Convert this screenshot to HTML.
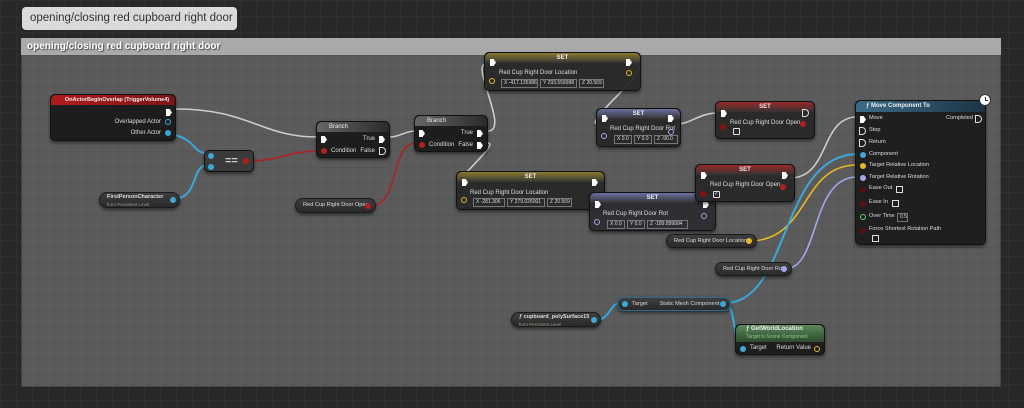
<!DOCTYPE html>
<html><head><meta charset="utf-8"><style>
*{margin:0;padding:0;box-sizing:border-box;white-space:nowrap}
body{width:1024px;height:408px;overflow:hidden;background:#282828;font-family:"Liberation Sans",sans-serif;position:relative;
background-image:linear-gradient(#2f2f2f 1px,transparent 1px),linear-gradient(90deg,#2f2f2f 1px,transparent 1px);background-size:16px 16px}
.a{position:absolute}
.bub{left:22px;top:7px;width:215px;height:23px;background:#dadada;border-radius:4px;color:#333;font-size:11.5px;line-height:23px;padding-left:8px}
.cm{left:21px;top:38px;width:980px;height:349px;background:#5b5b5b;border:1px solid #444;
background-image:linear-gradient(rgba(0,0,0,.05) 1px,transparent 1px),linear-gradient(90deg,rgba(0,0,0,.05) 1px,transparent 1px);background-size:16px 16px}
.ch{left:21px;top:38px;width:980px;height:17px;background:#a9a9a9;color:#fff;font-weight:bold;font-size:10px;line-height:17px;padding-left:6px;text-shadow:1px 1px 1px #444}
.n{position:absolute;background:rgba(24,24,24,.92);border-radius:5px;border:1px solid #111;box-shadow:0 2px 3px rgba(0,0,0,.5);color:#ddd;font-size:6px}
.g{position:absolute;background:linear-gradient(#3e3e3e,#2a2a2a);border-radius:8px;border:1px solid #1a1a1a;box-shadow:0 2px 3px rgba(0,0,0,.5);color:#ddd;font-size:5.6px;line-height:13px;padding-left:7px;overflow:hidden}
.t{position:absolute}
.ex{position:absolute;width:6px;height:7px;background:#fff;clip-path:polygon(0 0,60% 0,100% 50%,60% 100%,0 100%)}
.exo{position:absolute;width:7px;height:8px;border:1px solid #ddd;border-radius:0 4px 4px 0}
.p{position:absolute;width:6px;height:6px;border-radius:50%}
.v{position:absolute;border:1px solid #777;height:9px;font-size:5px;line-height:7px;color:#ddd;padding-left:2px;overflow:hidden}
.hs{position:absolute;left:0;right:0;top:0;height:10px;border-radius:5px 5px 0 0;text-align:center;font-weight:bold;font-size:6px;line-height:10px;color:#eee;overflow:hidden}
.mv .t{font-size:5.6px}
</style></head><body>
<div class="a bub">opening/closing red cupboard right door</div>
<div class="a cm"></div>
<div class="a ch">opening/closing red cupboard right door</div>

<svg class="a" style="left:0;top:0" width="1024" height="408" fill="none" stroke-width="1.6">
<path d="M176 109 C250 109,260 137,318 137" stroke="#ccc"/>
<path d="M390 137 C400 137,405 131,415 131" stroke="#ccc"/>
<path d="M488 131 C510 131,470 64,486 64" stroke="#ccc"/>
<path d="M488 143 C500 143,450 185,458 185" stroke="#ccc"/>
<path d="M634 64 C660 64,580 124,598 124" stroke="#ccc"/>
<path d="M677 124 C690 124,700 113,717 113" stroke="#ccc"/>
<path d="M598 185 C610 185,580 200,590 205" stroke="#ccc"/>
<path d="M790 178 C830 178,820 117,857 117" stroke="#ccc"/>
<path d="M168 133 C200 140,190 153,208 153" stroke="#3aa8d8" stroke-width="2"/>
<path d="M172 199 C200 199,190 165,208 165" stroke="#3aa8d8" stroke-width="2"/>
<path d="M248 161 C280 161,290 151,318 151" stroke="#b02020"/>
<path d="M370 206 C400 206,390 143,416 143" stroke="#b02020"/>
<path d="M749 241 C810 241,800 165,857 165" stroke="#e8b820"/>
<path d="M785 269 C820 269,810 177,857 177" stroke="#a0a8e8"/>
<path d="M596 320 C610 320,610 303,620 303" stroke="#3aa8d8" stroke-width="2"/>
<path d="M725 303 C790 303,780 155,857 154" stroke="#3aa8d8" stroke-width="2"/>
<path d="M725 303 C735 303,735 349,740 349" stroke="#3aa8d8" stroke-width="2"/>
</svg>

<div class="n" style="left:50px;top:94px;width:126px;height:47px">
<div class="hs" style="background:linear-gradient(90deg,#b01c1c,#7a1515);text-align:left;padding-left:14px;font-size:5.5px">OnActorBeginOverlap (TriggerVolume4)</div>
<div class="ex" style="left:115px;top:14px"></div>
<div class="t" style="right:14px;top:24px">Overlapped Actor</div><div class="p" style="right:4px;top:24px;border:1.5px solid #3aa8d8"></div>
<div class="t" style="right:14px;top:35px">Other Actor</div><div class="p" style="right:4px;top:35px;background:#3aa8d8"></div>
</div>
<div class="n" style="left:204px;top:150px;width:50px;height:22px;background:#3a3a3a">
<div class="p" style="left:3px;top:2px;background:#3aa8d8"></div><div class="p" style="left:3px;top:13px;background:#3aa8d8"></div>
<div class="t" style="left:20px;top:4px;font-size:11px;font-weight:bold;color:#ccc">==</div>
<div class="p" style="right:4px;top:7px;background:#b02020"></div></div>
<div class="g" style="left:99px;top:192px;width:81px;height:16px;line-height:9px;font-weight:bold;font-size:5.5px">FirstPersonCharacter<div style="font-size:4.5px;line-height:5px;color:#998;font-weight:normal">from Persistent Level</div><div class="p" style="right:3px;top:4px;background:#3aa8d8"></div></div>
<div class="n" style="left:316px;top:121px;width:74px;height:37px">
<div class="hs" style="background:linear-gradient(90deg,#666,#2a2a2a);text-align:left;padding-left:12px;font-weight:normal">Branch</div>
<div class="ex" style="left:4px;top:14px"></div><div class="t" style="right:14px;top:14px">True</div><div class="ex" style="right:4px;top:14px"></div>
<div class="p" style="left:4px;top:26px;background:#b02020"></div><div class="t" style="left:14px;top:26px">Condition</div>
<div class="t" style="right:14px;top:26px">False</div><div class="exo" style="right:3px;top:25px"></div></div>
<div class="n" style="left:414px;top:115px;width:74px;height:37px">
<div class="hs" style="background:linear-gradient(90deg,#666,#2a2a2a);text-align:left;padding-left:12px;font-weight:normal">Branch</div>
<div class="ex" style="left:4px;top:14px"></div><div class="t" style="right:14px;top:14px">True</div><div class="ex" style="right:4px;top:14px"></div>
<div class="p" style="left:4px;top:26px;background:#b02020"></div><div class="t" style="left:14px;top:26px">Condition</div>
<div class="t" style="right:14px;top:26px">False</div><div class="ex" style="right:4px;top:26px"></div></div>
<div class="g" style="left:295px;top:198px;width:81px;height:15px">Red Cup Right Door Open<div class="p" style="right:4px;top:4px;background:#b02020"></div></div>

<div class="n" style="left:484px;top:52px;width:157px;height:39px;background:rgba(40,40,40,.95)">
<div class="hs" style="background:linear-gradient(#8a7a30,#333)">SET</div>
<div class="ex" style="left:5px;top:6px"></div><div class="ex" style="right:8px;top:6px"></div>
<div class="t" style="left:14px;top:17px">Red Cup Right Door Location</div>
<div class="p" style="left:4px;top:25px;border:1.5px solid #e8b820"></div><div class="p" style="right:8px;top:17px;border:1.5px solid #e8b820"></div>
<div class="v" style="left:16px;top:26px;width:37px">X -417.135986</div><div class="v" style="left:55px;top:26px;width:37px">Y 293.559998</div><div class="v" style="left:94px;top:26px;width:25px">Z 20.569</div></div>
<div class="n" style="left:596px;top:108px;width:85px;height:39px;background:rgba(40,40,40,.95)">
<div class="hs" style="background:linear-gradient(#6a70a0,#333)">SET</div>
<div class="ex" style="left:5px;top:6px"></div><div class="ex" style="right:6px;top:6px"></div>
<div class="t" style="left:13px;top:17px">Red Cup Right Door Rot</div>
<div class="p" style="left:4px;top:24px;border:1.5px solid #a0a8e8"></div><div class="p" style="right:6px;top:20px;border:1.5px solid #a0a8e8"></div>
<div class="v" style="left:17px;top:26px;width:18px">X 0.0</div><div class="v" style="left:37px;top:26px;width:18px">Y 0.0</div><div class="v" style="left:57px;top:26px;width:24px">Z -90.0</div></div>
<div class="n" style="left:715px;top:101px;width:100px;height:38px;background:rgba(40,40,40,.95)">
<div class="hs" style="background:linear-gradient(#9a2828,#333)">SET</div>
<div class="ex" style="left:5px;top:8px"></div><div class="exo" style="right:5px;top:7px"></div>
<div class="t" style="left:14px;top:18px">Red Cup Right Door Open</div>
<div class="p" style="left:4px;top:22px;background:#8a1010"></div><div class="p" style="right:8px;top:19px;background:#b02020"></div>
<div class="a" style="left:17px;top:26px;width:7px;height:7px;border:1px solid #ddd;border-radius:1px"></div></div>

<div class="n" style="left:456px;top:171px;width:149px;height:39px;background:rgba(40,40,40,.95)">
<div class="hs" style="background:linear-gradient(#8a7a30,#333)">SET</div>
<div class="ex" style="left:5px;top:7px"></div><div class="ex" style="right:6px;top:7px"></div>
<div class="t" style="left:13px;top:18px">Red Cup Right Door Location</div>
<div class="p" style="left:4px;top:25px;border:1.5px solid #e8b820"></div><div class="p" style="right:4px;top:20px;border:1.5px solid #e8b820"></div>
<div class="v" style="left:16px;top:26px;width:32px">X -281.306</div><div class="v" style="left:50px;top:26px;width:38px">Y 279.026001</div><div class="v" style="left:90px;top:26px;width:25px">Z 20.569</div></div>
<div class="n" style="left:589px;top:192px;width:127px;height:39px;background:rgba(45,45,50,.96)">
<div class="hs" style="background:linear-gradient(#6a70a0,#333)">SET</div>
<div class="ex" style="left:5px;top:8px"></div><div class="ex" style="right:6px;top:8px"></div>
<div class="t" style="left:13px;top:18px">Red Cup Right Door Rot</div>
<div class="p" style="left:4px;top:26px;border:1.5px solid #a0a8e8"></div><div class="p" style="right:8px;top:20px;border:1.5px solid #a0a8e8"></div>
<div class="v" style="left:17px;top:27px;width:18px">X 0.0</div><div class="v" style="left:37px;top:27px;width:18px">Y 0.0</div><div class="v" style="left:57px;top:27px;width:41px">Z -189.899994</div></div>
<div class="n" style="left:695px;top:164px;width:100px;height:38px;background:rgba(40,40,40,.93)">
<div class="hs" style="background:linear-gradient(#9a2828,#333)">SET</div>
<div class="ex" style="left:5px;top:7px"></div><div class="ex" style="right:6px;top:7px"></div>
<div class="t" style="left:14px;top:17px">Red Cup Right Door Open</div>
<div class="p" style="left:4px;top:26px;background:#8a1010"></div><div class="p" style="right:8px;top:19px;background:#b02020"></div>
<div class="a" style="left:17px;top:26px;width:7px;height:7px;border:1px solid #ddd;border-radius:1px;font-size:6px;line-height:5px">✓</div></div>

<div class="g" style="left:666px;top:234px;width:91px;height:14px">Red Cup Right Door Location<div class="p" style="right:4px;top:3px;background:#e8b820"></div></div>
<div class="g" style="left:715px;top:262px;width:77px;height:14px">Red Cup Right Door Rot<div class="p" style="right:4px;top:3px;background:#a0a8e8"></div></div>
<div class="g" style="left:617px;top:297px;width:114px;height:14px;padding-left:14px;border-color:#2a6a90">Target<span style="margin-left:12px">Static Mesh Component</span><div class="p" style="left:4px;top:3px;background:#3aa8d8"></div><div class="p" style="right:4px;top:3px;background:#3aa8d8"></div></div>
<div class="g" style="left:511px;top:312px;width:90px;height:15px;line-height:9px;font-weight:bold;font-size:5.5px">ƒ cupboard_polySurface15<div style="font-size:4.5px;line-height:5px;color:#998;font-weight:normal">from Persistent Level</div><div class="p" style="right:3px;top:4px;background:#3aa8d8"></div></div>
<div class="n" style="left:735px;top:324px;width:90px;height:31px">
<div class="hs" style="height:17px;background:linear-gradient(#5a8a5a,#2e4a30);text-align:left;padding-left:10px;line-height:9px">ƒ GetWorldLocation<div style="font-size:5px;color:#8c8;font-weight:normal;line-height:6px">Target is Scene Component</div></div>
<div class="p" style="left:4px;top:21px;background:#3aa8d8"></div><div class="t" style="left:14px;top:20px">Target</div>
<div class="t" style="right:13px;top:20px">Return Value</div><div class="p" style="right:4px;top:21px;border:1.5px solid #e8b820"></div></div>

<div class="n mv" style="left:855px;top:100px;width:131px;height:145px;background:rgba(28,28,28,.95)">
<div class="hs" style="height:11px;background:linear-gradient(90deg,#3b6a88,#1e3444);text-align:left;padding-left:10px">ƒ Move Component To</div>
<div class="ex" style="left:4px;top:15px"></div><div class="t" style="left:13px;top:14px">Move</div><div class="t" style="right:12px;top:14px">Completed</div><div class="exo" style="right:3px;top:14px"></div>
<div class="exo" style="left:3px;top:26px"></div><div class="t" style="left:13px;top:26px">Stop</div>
<div class="exo" style="left:3px;top:38px"></div><div class="t" style="left:13px;top:38px">Return</div>
<div class="p" style="left:4px;top:51px;background:#3aa8d8"></div><div class="t" style="left:13px;top:50px">Component</div>
<div class="p" style="left:4px;top:62px;background:#e8b820"></div><div class="t" style="left:13px;top:61px">Target Relative Location</div>
<div class="p" style="left:4px;top:74px;background:#a0a8e8"></div><div class="t" style="left:13px;top:73px">Target Relative Rotation</div>
<div class="p" style="left:4px;top:86px;background:#5a1010"></div><div class="t" style="left:13px;top:84px">Ease Out</div><div class="a" style="left:40px;top:85px;width:7px;height:7px;border:1px solid #ddd"></div>
<div class="p" style="left:4px;top:100px;background:#5a1010"></div><div class="t" style="left:13px;top:98px">Ease In</div><div class="a" style="left:36px;top:99px;width:7px;height:7px;border:1px solid #ddd"></div>
<div class="p" style="left:4px;top:113px;border:1.5px solid #6c6"></div><div class="t" style="left:13px;top:112px">Over Time</div><div class="v" style="left:41px;top:112px;width:11px">0.5</div>
<div class="p" style="left:4px;top:127px;background:#5a1010"></div><div class="t" style="left:13px;top:125px">Force Shortest Rotation Path</div><div class="a" style="left:16px;top:134px;width:7px;height:7px;border:1px solid #ddd"></div>
</div>
<div class="a" style="left:979px;top:94px;width:12px;height:12px;border-radius:50%;background:#fff;border:1px solid #333"><div class="a" style="left:5px;top:2px;width:1px;height:4px;background:#333"></div><div class="a" style="left:5px;top:5px;width:3px;height:1px;background:#333"></div></div>
</body></html>
